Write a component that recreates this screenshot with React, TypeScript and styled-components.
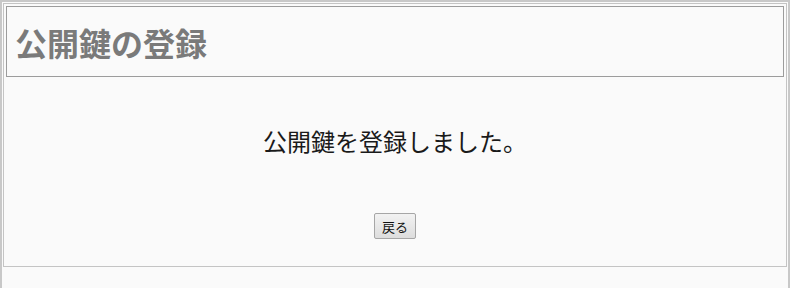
import styled, { createGlobalStyle } from "styled-components";

const GlobalStyle = createGlobalStyle`
  html, body {
    margin: 0;
    padding: 0;
    background: #fafafa;
  }
  body {
    font-family: "Noto Sans CJK JP", "Liberation Sans", sans-serif;
  }
`;

function App() {
  return (
    <>
      <GlobalStyle />
      <Frame>
        <Panel>
          <Header>
            <Title>公開鍵の登録</Title>
          </Header>
          <Content>
            <Message>公開鍵を登録しました。</Message>
            <BackButton type="button">戻る</BackButton>
          </Content>
        </Panel>
      </Frame>
    </>
  );
}

const Frame = styled.div`
  min-height: 290px;
  border: 2px solid #c8c8c8;
  border-bottom: none;
  padding: 1px;
  box-sizing: border-box;
`;

const Panel = styled.div`
  border: 1px solid #c4c4c4;
  padding: 2px;
  background: #fafafa;
`;

const Header = styled.div`
  height: 69px;
  border: 1px solid #9c9c9c;
  padding-left: 8px;
  display: flex;
  align-items: center;
`;

const Title = styled.h1`
  margin: 0;
  font-size: 32px;
  line-height: 36px;
  font-weight: bold;
  color: #7a7a7a;
  padding-top: 1px;
`;

const Content = styled.div`
  display: flex;
  flex-direction: column;
  align-items: center;
  padding: 48px 0 25px;
`;

const Message = styled.p`
  margin: 0;
  font-size: 24px;
  line-height: 32px;
  color: #1a1a1a;
`;

const BackButton = styled.button`
  margin-top: 56px;
  width: 42px;
  height: 26px;
  padding: 0;
  font-family: "Noto Sans CJK JP", "Liberation Sans", sans-serif;
  font-size: 13px;
  color: #111;
  background: linear-gradient(#f2f2f2, #dddddd);
  border: 1px solid #a6a6a6;
  border-radius: 2px;
`;

export default App;
